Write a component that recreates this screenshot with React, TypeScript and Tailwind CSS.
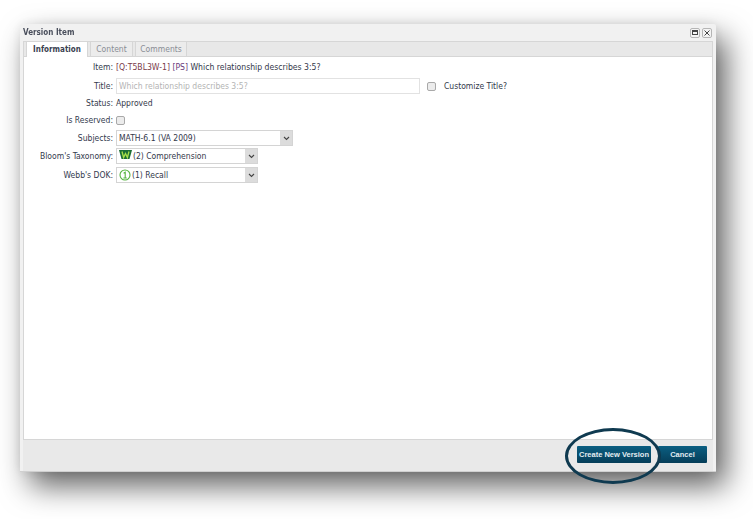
import type { ReactNode } from "react";

function Row({ label, children }: { label: string; children: ReactNode }) {
  return (
    <div className="flex h-full items-center">
      <div className="w-[89px] shrink-0 text-right text-[#333a4d]">{label}</div>
      <div className="ml-[3px] flex items-center">{children}</div>
    </div>
  );
}

function Checkbox() {
  return <span className="block h-[9px] w-[9px] rounded-[2px] border border-[#a9a9a9] bg-[#ececec]" />;
}

function Select({ width, icon, text }: { width: string; icon?: ReactNode; text: string }) {
  return (
    <div className={`flex h-[16px] items-stretch border border-[#d4d4d4] bg-white ${width}`}>
      <div className="flex flex-1 items-center gap-[1px] pl-[2px] text-[#33384a]">
        {icon}
        <span>{text}</span>
      </div>
      <div className="flex w-[12px] items-center justify-center bg-[#dcdcdc]">
        <svg width="7" height="5" viewBox="0 0 7 5">
          <path d="M1 1l2.5 2.5L6 1" fill="none" stroke="#444" strokeWidth="1.1" />
        </svg>
      </div>
    </div>
  );
}

function BloomIcon() {
  return (
    <svg width="13" height="10" viewBox="0 0 13 10" className="mb-[3px]">
      <path d="M0 0h13L10.5 9h-8z" fill="#1c6e35" />
      <path d="M3 1.5l1.6 6L6.5 3.5l1.9 4L10 1.5" fill="none" stroke="#a8e04a" strokeWidth="1.3" />
    </svg>
  );
}

function DokIcon() {
  return (
    <svg width="12" height="12" viewBox="0 0 12 12">
      <circle cx="6" cy="6" r="5" fill="#fff" stroke="#55b33d" strokeWidth="1.1" />
      <path d="M4.6 4.2l1.6-1V9M4.4 9h3.4" fill="none" stroke="#55b33d" strokeWidth="1.1" />
    </svg>
  );
}

function TabLabel({ children, active, width }: { children: string; active?: boolean; width: string }) {
  return active ? (
    <div className={`mb-[-1px] flex h-[16px] items-center justify-center border border-b-0 border-[#d6d6d6] bg-white text-[8px] font-bold text-[#3a3f50] ${width}`}>
      {children}
    </div>
  ) : (
    <div className={`flex h-[15px] items-center justify-center border border-b-0 border-[#d6d6d6] bg-[#ececec] text-[#8a8d95] ${width}`}>
      {children}
    </div>
  );
}

export default function App() {
  return (
    <div className="h-[519px] w-[753px] overflow-hidden bg-white pl-[20px] pt-[24px] font-['DejaVu_Sans_Condensed','DejaVu_Sans',sans-serif] text-[8.5px] [font-stretch:condensed]">
      <div className="relative flex h-[448px] w-[696px] flex-col rounded-t-[2px] border-b border-[#d0d0d0] bg-[#f1f1f1] px-[3px] shadow-[10px_14px_30px_rgba(0,0,0,0.62),0_0_12px_rgba(0,0,0,0.08)] blur-[0.3px]">
        <div className="flex h-[17px] shrink-0 items-center justify-between pr-[1px]">
          <span className="text-[8px] font-bold text-[#4a4f5c]">Version Item</span>
          <div className="flex gap-[2px]">
            <div className="flex h-[10px] w-[10px] items-center justify-center rounded-[2px] border border-[#b5b5b5] bg-[#f4f4f4]">
              <span className="block h-[5px] w-[6px] border border-t-2 border-[#444]" />
            </div>
            <div className="flex h-[10px] w-[10px] items-center justify-center rounded-[2px] border border-[#b5b5b5] bg-[#f4f4f4]">
              <svg width="6" height="6" viewBox="0 0 6 6">
                <path d="M0.5 0.5l5 5M5.5 0.5l-5 5" stroke="#444" strokeWidth="1" />
              </svg>
            </div>
          </div>
        </div>

        <div className="flex min-h-0 flex-1 flex-col border border-[#d6d6d6] bg-white">
          <div className="flex h-[15px] shrink-0 items-end gap-[2px] border-b border-[#d6d6d6] bg-[#e8e8e8] pl-[2px]">
            <TabLabel active width="w-[62px]">Information</TabLabel>
            <TabLabel width="w-[43px]">Content</TabLabel>
            <TabLabel width="w-[52px]">Comments</TabLabel>
          </div>

          <div className="flex flex-1 flex-col pt-[3px]">
            <div className="h-[15px]">
              <Row label="Item:">
                <span className="text-[8.6px] text-[#33384a]">
                  <span className="text-[#7a3b4a]">[Q:T5BL3W-1]</span> <span className="text-[#6a3b7a]">[PS]</span> Which relationship describes 3:5?
                </span>
              </Row>
            </div>
            <div className="mt-[3px] h-[16px]">
              <Row label="Title:">
                <div className="flex h-[16px] w-[304px] items-center border border-[#e2e2e2] pl-[2px] text-[#b4b4b4]">
                  Which relationship describes 3:5?
                </div>
                <span className="ml-[7px]">
                  <Checkbox />
                </span>
                <span className="ml-[8px] text-[#33384a]">Customize Title?</span>
              </Row>
            </div>
            <div className="mt-[2px] h-[15px]">
              <Row label="Status:">
                <span className="text-[#33384a]">Approved</span>
              </Row>
            </div>
            <div className="mt-[2px] h-[15px]">
              <Row label="Is Reserved:">
                <Checkbox />
              </Row>
            </div>
            <div className="mt-[2px] h-[16px]">
              <Row label="Subjects:">
                <Select width="w-[177px]" text="MATH-6.1 (VA 2009)" />
              </Row>
            </div>
            <div className="mt-[2px] h-[16px]">
              <Row label="Bloom's Taxonomy:">
                <Select width="w-[142px]" icon={<BloomIcon />} text="(2) Comprehension" />
              </Row>
            </div>
            <div className="mt-[3px] h-[16px]">
              <Row label="Webb's DOK:">
                <Select width="w-[142px]" icon={<DokIcon />} text="(1) Recall" />
              </Row>
            </div>
          </div>
        </div>

        <div className="flex h-[31px] shrink-0 items-center justify-end gap-[7px] bg-[#e9e9e9] pb-[2px] pr-[6px] font-['Liberation_Sans',sans-serif] text-[7.5px] font-bold whitespace-nowrap text-[#e4edf2]">
          <div className="flex h-[17px] w-[74px] items-center justify-center rounded-[1px] bg-gradient-to-b from-[#0b5f82] to-[#063e59]">
            Create New Version
          </div>
          <div className="flex h-[17px] w-[49px] items-center justify-center rounded-[1px] bg-gradient-to-b from-[#0b5f82] to-[#063e59]">
            Cancel
          </div>
        </div>

        {/* hand-drawn highlight round the primary button */}
        <div className="absolute left-[545px] top-[404px] h-[56px] w-[96px] rounded-[50%] border-[3.5px] border-[#0f3a50]" />
      </div>
    </div>
  );
}
